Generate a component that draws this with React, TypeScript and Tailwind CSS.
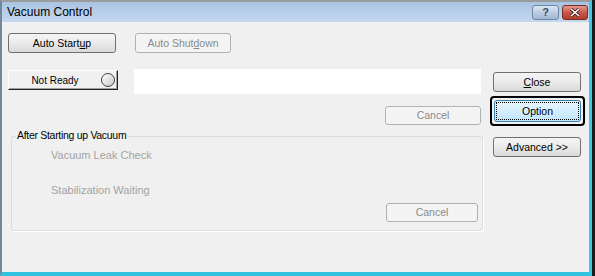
import React from "react";

const font = { fontFamily: '"Liberation Sans", Arial, sans-serif' };

function Btn({ children, className = "", disabled = false }: { children: React.ReactNode; className?: string; disabled?: boolean }) {
  return (
    <div
      className={
        "flex items-center justify-center rounded-[3px] border text-[10.5px] leading-none " +
        (disabled
          ? "border-[#adb2b5] bg-[#f4f4f4] text-[#8a8a8a] "
          : "border-[#707070] bg-gradient-to-b from-[#f4f4f4] via-[#ebebeb] to-[#d9d9d9] text-black ") +
        className
      }
    >
      {children}
    </div>
  );
}

export default function App() {
  return (
    <div className="w-[595px] h-[276px] bg-[#1b1b1b] flex" style={font}>
      <div className="w-[592px] h-[276px] flex flex-col border-l-[2px] border-l-[#74869b] border-t-[2px] border-t-[#9c9c9c] border-r-[3px] border-r-[#3fc7e6] border-b-[4px] border-b-[#2fc3df] bg-[#f0f0f0]">
        {/* Title bar */}
        <div className="h-[20px] flex items-center bg-gradient-to-b from-[#a9c4e3] to-[#c4d8ee] pl-[5px] pr-[1px]">
          <span className="text-[12px] text-black">Vacuum Control</span>
          <div className="ml-auto flex gap-[3px] items-center mt-[1px]">
            <div className="w-[27px] h-[15px] rounded-[3px] border border-[#6f86a6] bg-gradient-to-b from-[#dbe6f3] to-[#9fb6d3] flex items-center justify-center text-[11px] font-bold text-[#3a4a60] leading-none">
              ?
            </div>
            <div className="w-[26px] h-[15px] rounded-[3px] border border-[#7a2b22] bg-gradient-to-b from-[#e39a8c] via-[#c9594a] to-[#b23c2b] flex items-center justify-center">
              <svg width="12" height="9" viewBox="0 0 12 9">
                <path d="M2 1 L10 8 M10 1 L2 8" stroke="#3a1a14" strokeWidth="3" />
                <path d="M2 1 L10 8 M10 1 L2 8" stroke="#ffffff" strokeWidth="1.6" />
              </svg>
            </div>
          </div>
        </div>

        {/* Client */}
        <div className="flex flex-1">
          {/* Left column */}
          <div className="w-[481px] flex flex-col pl-[6px]">
            <div className="flex mt-[11px] gap-[19px]">
              <Btn className="w-[108px] h-[20px]">
                <span>
                  Auto Start<span className="underline">u</span>p
                </span>
              </Btn>
              <Btn disabled className="w-[96px] h-[20px]">
                <span>
                  Auto Shut<span className="underline">d</span>own
                </span>
              </Btn>
            </div>
            <div className="flex mt-[16px] items-start">
              <div className="mt-[1px] w-[110px] h-[20px] flex items-center border border-t-white border-l-white border-b-[#222] border-r-[#222] shadow-[inset_-1px_-1px_0_#a0a0a0]">
                <div className="flex-1 text-center text-[10px] text-black">Not Ready</div>
                <div className="w-[14px] h-[14px] rounded-full border border-[#404040] bg-gradient-to-br from-[#ffffff] to-[#c8c8c8] mr-[2px]" />
              </div>
              <div className="ml-[16px] w-[347px] h-[25px] bg-white" />
            </div>
            <div className="flex justify-end mt-[12px] pr-[2px]">
              <Btn disabled className="w-[96px] h-[19px]">Cancel</Btn>
            </div>
            {/* Group box */}
            <div className="relative mt-[11px] ml-[3px] w-[472px] h-[95px] rounded-[3px] border border-[#d5dfe5] shadow-[1px_1px_0_#ffffff]">
              <span className="absolute left-[4px] top-[-7px] bg-[#f0f0f0] px-[1px] text-[10.5px] tracking-[-0.3px] text-black leading-none">
                After Starting up Vacuum
              </span>
              <div className="flex flex-col pl-[39px] pt-[12px] text-[11px] text-[#a3a3a3]">
                <span className="leading-[13px]">Vacuum Leak Check</span>
                <span className="leading-[13px] mt-[22px]">Stabilization Waiting</span>
              </div>
              <div className="absolute right-[4px] top-[66px]">
                <Btn disabled className="w-[92px] h-[19px]">Cancel</Btn>
              </div>
            </div>
          </div>

          {/* Right column */}
          <div className="flex flex-col pl-[10px] pt-[50px]">
            <Btn className="w-[88px] h-[20px]">
              <span>
                <span className="underline">C</span>lose
              </span>
            </Btn>
            <div className="mt-[4px] -ml-[3px] w-[95px] h-[30px] rounded-[4px] border-[2px] border-black flex items-center pl-[2px]">
              <div className="w-[87px] h-[22px] rounded-[3px] border border-[#3c7fb1] bg-gradient-to-b from-[#eaf6fd] to-[#bee6fd] p-[1px]">
                <div className="w-full h-full border border-dotted border-black flex items-center justify-center text-[10.5px] text-black leading-none">
                  Option
                </div>
              </div>
            </div>
            <Btn className="w-[88px] h-[20px] mt-[11px]">Advanced &gt;&gt;</Btn>
          </div>
        </div>
      </div>
    </div>
  );
}
